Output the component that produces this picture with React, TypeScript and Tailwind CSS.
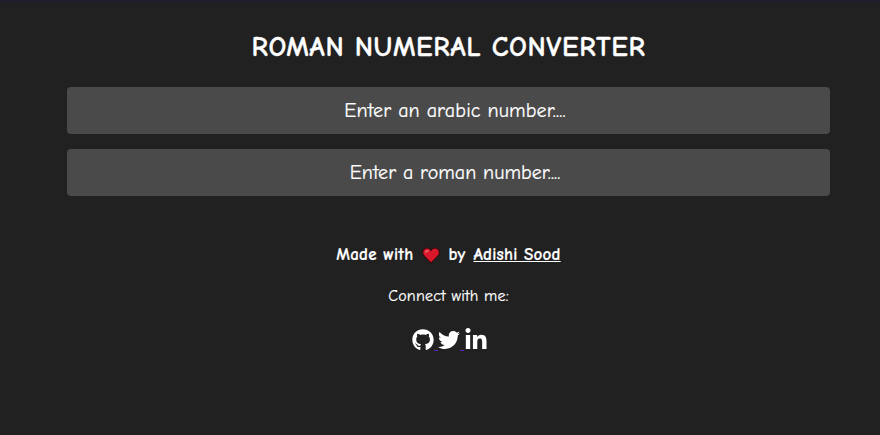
import { FaGithub, FaTwitter, FaLinkedinIn } from "react-icons/fa";

const font = { fontFamily: '"Comic Sans MS", "Comic Neue", "Lato", cursive' };

function Heart() {
  return (
    <svg width="18" height="17" viewBox="0 0 18 17" className="inline-block">
      <path d="M9 16.6 L1.2 8.8 C-1 5.8 0.2 1.4 3.6 0.6 C5.8 0.2 7.8 1 9 2.9 C10.2 1 12.2 0.2 14.4 0.6 C17.8 1.4 19 5.8 16.8 8.8 Z" fill="#3a0a0e" />
      <path d="M9 15.2 L2.2 8.3 C0.4 6 1.2 2.4 4 1.7 C6 1.3 7.9 2.3 9 4.5 C10.1 2.3 12 1.3 14 1.7 C16.8 2.4 17.6 6 15.8 8.3 Z" fill="#d8182a" />
      <path d="M3 6.6 C2.6 4.2 4 2.8 5.6 2.9 C6.6 3 7 3.6 7.2 4.4 C5.6 4.4 4.4 5.2 3 6.6 Z" fill="#f2606a" />
    </svg>
  );
}

function Gap() {
  return <span className="w-[4px] h-[1px] bg-[#5a2ac0]" />;
}

export default function App() {
  return (
    <div className="min-h-[435px] bg-[#212121] text-white flex flex-col items-center border-t-[3px] border-[#1f1f2b] pl-[17px]" style={font}>
      <h1 className="mt-[28px] h-[33px] leading-[33px] text-[28px] tracking-[0.58px] font-bold [-webkit-text-stroke:0.3px_white]">ROMAN NUMERAL CONVERTER</h1>
      <input
        placeholder="Enter an arabic number...."
        className="mt-[23px] w-[763px] h-[47px] rounded-[4px] bg-[#4a4a4a] pl-[13px] text-center text-[20px] tracking-[0.15px] outline-none placeholder:text-white [-webkit-text-stroke:0.2px_white]"
      />
      <input
        placeholder="Enter a roman number...."
        className="mt-[15px] w-[763px] h-[47px] rounded-[4px] bg-[#4a4a4a] pl-[13px] text-center text-[20px] tracking-[0.05px] outline-none placeholder:text-white [-webkit-text-stroke:0.2px_white]"
      />
      <p className="mt-[48px] h-[22px] leading-[22px] text-[17px] tracking-[0.25px] font-bold flex items-center [-webkit-text-stroke:0.2px_white]">
        <span>Made with</span>
        <span className="ml-[9px] mr-[8px] flex"><Heart /></span>
        <span>by</span>
        <a className="ml-[8px] underline">Adishi Sood</a>
      </p>
      <p className="mt-[20px] h-[20px] leading-[20px] text-[16px] tracking-[0.2px] [-webkit-text-stroke:0.2px_white]">Connect with me:</p>
      <div className="mt-[22px] pl-[2px] flex items-end text-[22px]">
        <FaGithub />
        <Gap />
        <FaTwitter />
        <Gap />
        <FaLinkedinIn size={24} className="mb-[-1px]" />
      </div>
    </div>
  );
}
